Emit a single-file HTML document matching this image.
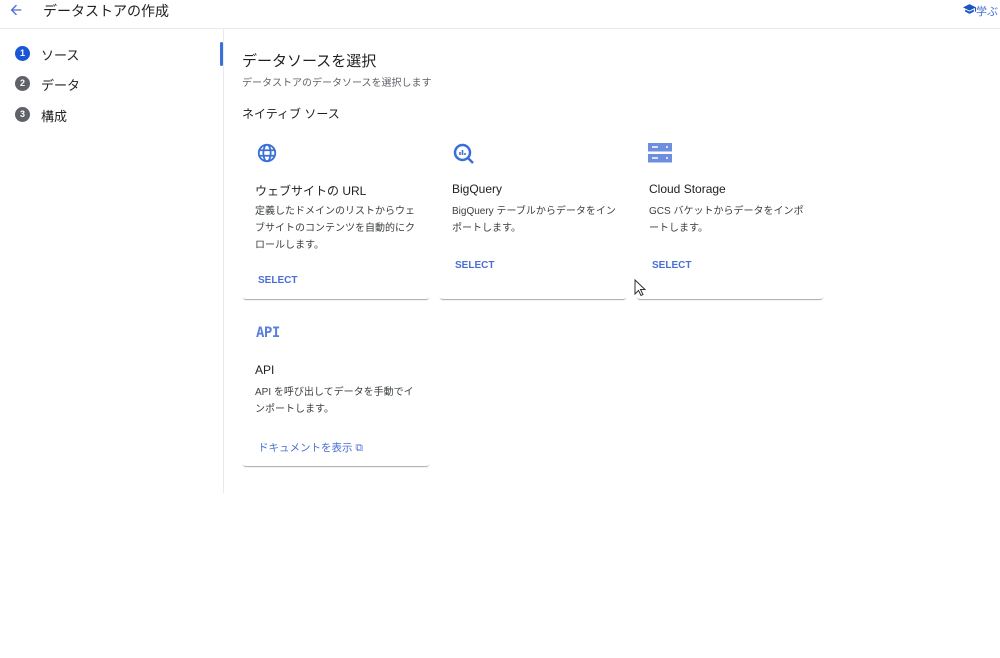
<!DOCTYPE html>
<html><head><meta charset="utf-8"><style>
*{margin:0;padding:0;box-sizing:border-box}
body{width:1000px;height:658px;background:#fff;font-family:"Liberation Sans","Noto Sans CJK JP",sans-serif;color:#202124;position:relative;overflow:hidden}
.a{position:absolute}
.hdr{left:0;top:0;width:1000px;height:29px;border-bottom:1px solid #e8eaed}
.card{position:absolute;width:188px;border-radius:0 0 4px 4px;box-shadow:0 2px 1px -1px rgba(0,0,0,.35)}
.t{font-size:12px;position:absolute;left:13px}
.d{font-size:10px;line-height:17px;position:absolute;left:13px;width:164px;color:#3c4043}
.sel{position:absolute;left:16px;font-size:10px;font-weight:bold;color:#4a6fd4}
.num{position:absolute;left:15px;width:15px;height:15px;border-radius:50%;color:#fff;font-size:9px;font-weight:bold;text-align:center;line-height:15px}
.st{position:absolute;left:41px;font-size:13px}
</style></head><body>
<div class="a hdr"></div>
<svg class="a" style="left:8px;top:2px" width="16" height="16" viewBox="0 0 24 24"><path d="M20 11H7.8l5.6-5.6L12 4l-8 8 8 8 1.4-1.4L7.8 13H20z" fill="#4a6fd4"/></svg>
<div class="a" style="left:43px;top:1px;font-size:14px">データストアの作成</div>
<svg class="a" style="left:963px;top:4px" width="13" height="11" viewBox="0 0 24 20"><path d="M12 0L0 6l12 6 10-5v7h2V6z M4 10v4l8 4 8-4v-4l-8 4z" fill="#1a56c4"/></svg>
<div class="a" style="left:976px;top:3px;font-size:11px;color:#4a6fd4">学ぶ</div>

<div class="num" style="top:46px;background:#1a56d6">1</div><div class="st" style="top:45px">ソース</div>
<div class="num" style="top:76px;background:#5f6368">2</div><div class="st" style="top:75px">データ</div>
<div class="num" style="top:107px;background:#5f6368">3</div><div class="st" style="top:106px">構成</div>
<div class="a" style="left:223px;top:29px;width:1px;height:464px;background:#e8eaed"></div>
<div class="a" style="left:220px;top:42px;width:3px;height:24px;background:#3b6fd8;border-radius:2px"></div>

<div class="a" style="left:242px;top:50px;font-size:15px">データソースを選択</div>
<div class="a" style="left:242px;top:74px;font-size:10px;color:#5f6368">データストアのデータソースを選択します</div>
<div class="a" style="left:242px;top:105px;font-size:12px">ネイティブ ソース</div>

<div class="card" style="left:242px;top:130px;height:169px">
<svg class="a" style="left:14px;top:12px" width="22" height="22" viewBox="0 0 24 24"><circle cx="12" cy="12" r="9" fill="none" stroke="#3b6fd8" stroke-width="2"/><ellipse cx="12" cy="12" rx="4" ry="9" fill="none" stroke="#3b6fd8" stroke-width="2"/><path d="M3 9h18M3 15h18" stroke="#3b6fd8" stroke-width="2"/></svg>
<div class="t" style="top:52px">ウェブサイトの URL</div>
<div class="d" style="top:73px">定義したドメインのリストからウェブサイトのコンテンツを自動的にクロールします。</div>
<div class="sel" style="top:145px">SELECT</div>
</div>
<div class="card" style="left:439px;top:130px;height:169px">
<svg class="a" style="left:13px;top:12px" width="24" height="24" viewBox="0 0 24 24"><circle cx="10.5" cy="10.5" r="7.5" fill="none" stroke="#3b6fd8" stroke-width="2.5"/><path d="M16 16l5 5" stroke="#3b6fd8" stroke-width="2.5"/><path d="M8 10v3M10.5 8v5M13 11v2" stroke="#3b6fd8" stroke-width="1.6"/></svg>
<div class="t" style="top:52px">BigQuery</div>
<div class="d" style="top:73px">BigQuery テーブルからデータをインポートします。</div>
<div class="sel" style="top:130px">SELECT</div>
</div>
<div class="card" style="left:636px;top:130px;height:169px">
<svg class="a" style="left:12px;top:13px" width="24" height="20" viewBox="0 0 24 20"><rect x="0" y="0" width="24" height="8.5" fill="#6e8fe0"/><rect x="0" y="11" width="24" height="8.5" fill="#6e8fe0"/><path d="M4 4h6M4 15h6" stroke="#fff" stroke-width="1.5"/><circle cx="19" cy="4" r="1" fill="#fff"/><circle cx="19" cy="15" r="1" fill="#fff"/></svg>
<div class="t" style="top:52px">Cloud Storage</div>
<div class="d" style="top:73px">GCS バケットからデータをインポートします。</div>
<div class="sel" style="top:130px">SELECT</div>
</div>
<div class="card" style="left:242px;top:316px;height:150px">
<div class="a" style="left:14px;top:9px;font-family:'DejaVu Sans Mono',monospace;font-weight:bold;font-size:14px;color:#5a7fdc;letter-spacing:-0.5px">API</div>
<div class="t" style="top:47px">API</div>
<div class="d" style="top:68px">API を呼び出してデータを手動でインポートします。</div>
<div class="a" style="left:16px;top:124px;font-size:10.5px;color:#4a6fd4">ドキュメントを表示 ⧉</div>
</div>
<svg class="a" style="left:634px;top:279px" width="12" height="18" viewBox="0 0 12 18"><path d="M1 1v14l3.5-3.5 2.5 5 2-1-2.5-5H11z" fill="#fff" stroke="#333" stroke-width="1"/></svg>
</body></html>
